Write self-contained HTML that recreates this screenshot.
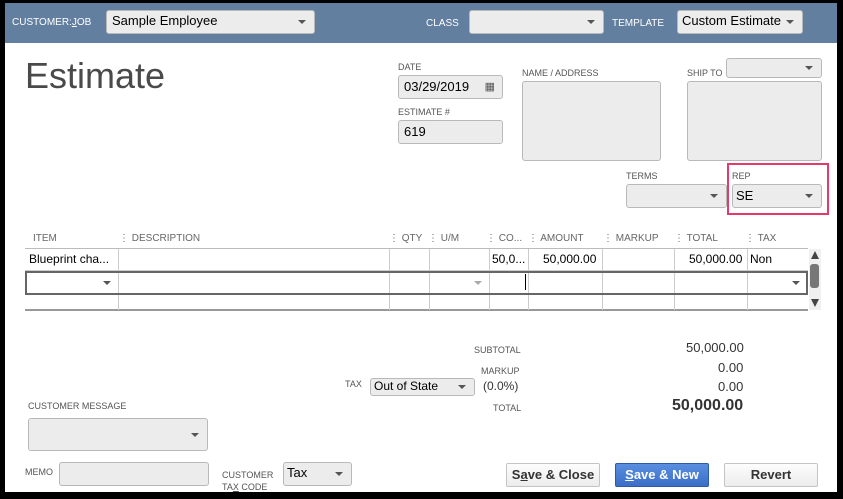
<!DOCTYPE html>
<html><head><style>
*{box-sizing:border-box;margin:0;padding:0}
body{width:843px;height:499px;background:#000;position:relative;overflow:hidden;font-family:"Liberation Sans",Arial,sans-serif}
.win{position:absolute;left:5px;top:3px;width:832px;height:489px;background:#fff}
.hdr{position:absolute;left:5px;top:3px;width:832px;height:40px;background:#627f9f}
.a{position:absolute}
.lbl{position:absolute;font-size:9px;color:#555;text-transform:uppercase}
.hl{position:absolute;font-size:10px;color:#fff}
.box{position:absolute;background:#ececec;border:1px solid #b9b9b9;border-radius:3px;font-size:13px;color:#000;padding-left:5px}
.dd:after{content:"";position:absolute;right:8px;top:50%;margin-top:-2px;border-left:4px solid transparent;border-right:4px solid transparent;border-top:4px solid #555}
.btn{position:absolute;height:24px;border:1px solid #c4c4c4;border-radius:2px;background:linear-gradient(#fdfdfd,#ececec);font-size:13px;font-weight:bold;color:#333;text-align:center;line-height:22px}
.gh{position:absolute;top:233px;font-size:10px;color:#666}
.c{position:absolute;font-size:12px;color:#000}
.vl{position:absolute;width:1px;background:#ccc}
</style></head><body>
<div class="win"></div>
<div class="hdr"></div>
<div class="hl" style="left:12px;top:17px">CUSTOMER:<u>J</u>OB</div>
<div class="box dd" style="left:106px;top:10px;width:209px;height:24px;line-height:20px">Sample Employee</div>
<div class="hl" style="left:426px;top:18px">CLASS</div>
<div class="box dd" style="left:469px;top:10px;width:135px;height:24px"></div>
<div class="hl" style="left:612px;top:18px">TEMPLATE</div>
<div class="box dd" style="left:677px;top:10px;width:126px;height:24px;line-height:20px;padding-left:4px">Custom Estimate</div>

<div class="a" style="left:25px;top:55px;font-size:36px;color:#4a4a4a">Estimate</div>

<div class="lbl" style="left:398px;top:62px">Date</div>
<div class="box" style="left:398px;top:75px;width:105px;height:24px;line-height:22px">03/29/2019<span style="position:absolute;right:7px;top:0;font-size:11px;color:#555">&#9638;</span></div>
<div class="lbl" style="left:398px;top:107px">Estimate #</div>
<div class="box" style="left:398px;top:120px;width:105px;height:24px;line-height:22px">619</div>

<div class="lbl" style="left:522px;top:68px">Name / Address</div>
<div class="box" style="left:522px;top:81px;width:139px;height:80px"></div>
<div class="lbl" style="left:687px;top:68px">Ship To</div>
<div class="box dd" style="left:726px;top:58px;width:96px;height:20px"></div>
<div class="box" style="left:687px;top:81px;width:135px;height:80px"></div>

<div class="lbl" style="left:626px;top:171px">Terms</div>
<div class="box dd" style="left:626px;top:184px;width:101px;height:24px"></div>
<div class="a" style="left:727px;top:163px;width:102px;height:52px;border:2px solid #e5396a"></div>
<div class="lbl" style="left:732px;top:171px">Rep</div>
<div class="box dd" style="left:732px;top:184px;width:90px;height:24px;line-height:22px;padding-left:3px">SE</div>

<div class="gh" style="left:33px">ITEM</div>
<div class="gh" style="left:119px">&#8942; DESCRIPTION</div>
<div class="gh" style="left:389px">&#8942; QTY</div>
<div class="gh" style="left:428px">&#8942; U/M</div>
<div class="gh" style="left:486px">&#8942; CO...</div>
<div class="gh" style="left:528px">&#8942; AMOUNT</div>
<div class="gh" style="left:603px">&#8942; MARKUP</div>
<div class="gh" style="left:674px">&#8942; TOTAL</div>
<div class="gh" style="left:745px">&#8942; TAX</div>

<div class="a" style="left:25px;top:248px;width:783px;height:63px;border-top:1px solid #bbb;border-bottom:2px solid #999"></div>
<div class="a" style="left:25px;top:270px;width:783px;height:1px;background:#ccc"></div>
<div class="a" style="left:25px;top:294px;width:783px;height:1px;background:#ccc"></div>
<div class="vl" style="left:118px;top:249px;height:61px"></div>
<div class="vl" style="left:389px;top:249px;height:61px"></div>
<div class="vl" style="left:429px;top:249px;height:61px"></div>
<div class="vl" style="left:489px;top:249px;height:61px"></div>
<div class="vl" style="left:528px;top:249px;height:61px"></div>
<div class="vl" style="left:602px;top:249px;height:61px"></div>
<div class="vl" style="left:674px;top:249px;height:61px"></div>
<div class="vl" style="left:747px;top:249px;height:61px"></div>
<div class="a" style="left:25px;top:271px;width:783px;height:24px;border:2px solid #666"></div>
<div class="a" style="left:103px;top:281px;border-left:4px solid transparent;border-right:4px solid transparent;border-top:4px solid #555"></div>
<div class="a" style="left:474px;top:281px;border-left:4px solid transparent;border-right:4px solid transparent;border-top:4px solid #aaa"></div>
<div class="a" style="left:792px;top:281px;border-left:4px solid transparent;border-right:4px solid transparent;border-top:4px solid #555"></div>
<div class="a" style="left:525px;top:274px;width:1px;height:16px;background:#000"></div>
<div class="c" style="left:29px;top:252px">Blueprint cha...</div>
<div class="c" style="left:492px;top:252px">50,0...</div>
<div class="c" style="left:543px;top:252px">50,000.00</div>
<div class="c" style="left:689px;top:252px">50,000.00</div>
<div class="c" style="left:750px;top:252px">Non</div>
<div class="a" style="left:809px;top:249px;width:12px;height:61px;background:#f0f0f0"></div>
<div class="a" style="left:811px;top:251px;border-left:4px solid transparent;border-right:4px solid transparent;border-bottom:8px solid #444"></div>
<div class="a" style="left:810px;top:264px;width:9px;height:24px;background:#777;border-radius:3px"></div>
<div class="a" style="left:811px;top:299px;border-left:4px solid transparent;border-right:4px solid transparent;border-top:8px solid #444"></div>

<div class="lbl" style="left:474px;top:345px">Subtotal</div>
<div class="a" style="left:686px;top:340px;font-size:13px;color:#333">50,000.00</div>
<div class="lbl" style="left:481px;top:366px">Markup</div>
<div class="a" style="left:718px;top:360px;font-size:13px;color:#333">0.00</div>
<div class="lbl" style="left:345px;top:379px">Tax</div>
<div class="box dd" style="left:370px;top:378px;width:105px;height:18px;line-height:15px;font-size:12px;padding-left:3px">Out of State</div>
<div class="a" style="left:483px;top:379px;font-size:12px;color:#333">(0.0%)</div>
<div class="a" style="left:718px;top:379px;font-size:13px;color:#333">0.00</div>
<div class="lbl" style="left:493px;top:403px">Total</div>
<div class="a" style="left:672px;top:397px;font-size:16px;font-weight:bold;color:#333">50,000.00</div>

<div class="lbl" style="left:28px;top:401px">Customer Message</div>
<div class="box dd" style="left:28px;top:418px;width:180px;height:33px"></div>
<div class="lbl" style="left:25px;top:467px">Memo</div>
<div class="box" style="left:59px;top:462px;width:150px;height:24px"></div>
<div class="lbl" style="left:222px;top:469px;line-height:12px">Customer<br>Ta<u>x</u> Code</div>
<div class="box dd" style="left:283px;top:462px;width:69px;height:24px;line-height:20px;padding-left:3px">Tax</div>

<div class="btn" style="left:506px;top:463px;width:94px">S<u>a</u>ve &amp; Close</div>
<div class="btn" style="left:615px;top:463px;width:94px;background:linear-gradient(#5a8ee0,#3b6fc7);border-color:#2f5aa8;color:#fff"><u>S</u>ave &amp; New</div>
<div class="btn" style="left:724px;top:463px;width:94px">Revert</div>
</body></html>
